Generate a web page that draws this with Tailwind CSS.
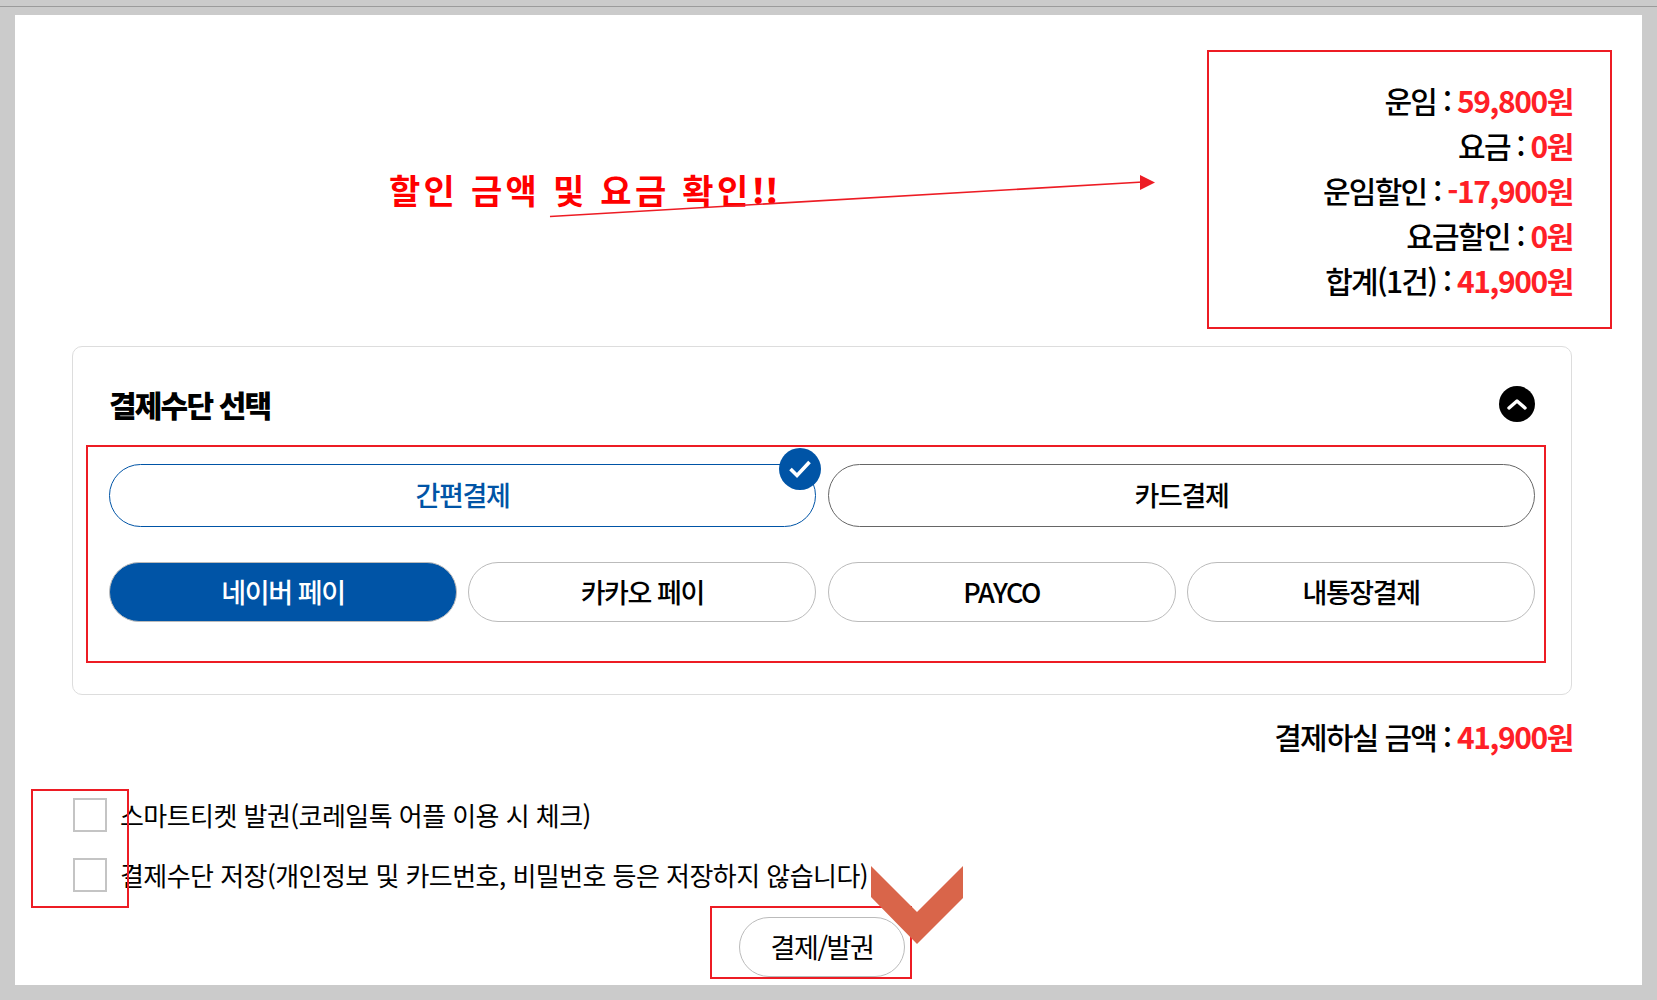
<!DOCTYPE html>
<html lang="ko">
<head>
    <meta charset="UTF-8">
    <title>결제수단 선택</title>
    <script src="https://cdn.jsdelivr.net/npm/@tailwindcss/browser@4"></script>
</head>
<body class="relative h-[1000px] overflow-hidden bg-[#cbcbcb] font-['Noto_Sans_CJK_KR','Noto_Sans',sans-serif] text-black">
    <!-- Window line on top -->
    <div class="h-[7px] border-b border-[#9b9b9b]"></div>

    <!-- Page -->
    <main class="mt-[8px] ml-[15px] h-[970px] w-[1627px] bg-white pt-[63px] pr-[70px] pl-[57px]">
        <!-- Fare summary -->
        <div class="-mr-[1px] text-right text-[30px] leading-[45px] font-medium tracking-[-1.7px]">
            <p>운임 : <b class="font-bold tracking-[-1.4px] text-[#ff1f27]">59,800원</b></p>
            <p>요금 : <b class="font-bold tracking-[-1.4px] text-[#ff1f27]">0원</b></p>
            <p>운임할인 : <b class="font-bold tracking-[-1.4px] text-[#ff1f27]">-17,900원</b></p>
            <p>요금할인 : <b class="font-bold tracking-[-1.4px] text-[#ff1f27]">0원</b></p>
            <p>합계(1건) : <b class="font-bold tracking-[-1.4px] text-[#ff1f27]">41,900원</b></p>
        </div>

        <!-- Payment method card -->
        <section class="mt-[43px] h-[349px] rounded-[10px] border border-[#dddddd] px-[36px] pt-[37px]">
            <div class="flex h-[40px] items-center justify-between">
                <h2 class="text-[30px] font-black tracking-[-1.8px]">결제수단 선택</h2>
                <span class="flex h-[36px] w-[36px] items-center justify-center rounded-full bg-black">
                    <svg width="22" height="14" viewBox="0 0 22 14" fill="none" stroke="white" stroke-width="3.4" stroke-linecap="round" stroke-linejoin="round"><path d="M3 11 L11 4 L19 11"/></svg>
                </span>
            </div>

            <div class="mt-[40px] grid grid-cols-2 gap-x-[12px] text-[27px] font-medium tracking-[-1.4px]">
                <div class="relative flex h-[63px] items-center justify-center rounded-full border border-[#0054a6] text-[#0054a6]">
                    간편결제
                    <span class="absolute -top-[17px] right-[-6px] flex h-[42px] w-[42px] items-center justify-center rounded-full bg-[#0054a6]">
                        <svg width="24" height="20" viewBox="0 0 24 20" fill="none" stroke="white" stroke-width="3.6"><path d="M2.5 10 L9 16.5 L21.5 3"/></svg>
                    </span>
                </div>
                <div class="flex h-[63px] items-center justify-center rounded-full border border-[#666666]">카드결제</div>
            </div>

            <div class="mt-[35px] grid grid-cols-4 gap-x-[11.5px] text-[27px] font-medium tracking-[-1.4px]">
                <div class="flex h-[60px] items-center justify-center rounded-full border border-[#bbbbbb] bg-[#0054a6] text-white">네이버 페이</div>
                <div class="flex h-[60px] items-center justify-center rounded-full border border-[#bbbbbb]">카카오 페이</div>
                <div class="flex h-[60px] items-center justify-center rounded-full border border-[#bbbbbb]">PAYCO</div>
                <div class="flex h-[60px] items-center justify-center rounded-full border border-[#bbbbbb]">내통장결제</div>
            </div>
        </section>

        <!-- Amount to pay -->
        <p class="mt-[19px] -mr-[1px] text-right text-[30px] leading-[45px] font-medium tracking-[-1.7px]">결제하실 금액 : <b class="font-bold tracking-[-1.4px] text-[#ff1f27]">41,900원</b></p>

        <!-- Options -->
        <div class="mt-[39px] ml-[1px] flex flex-col gap-[26px] text-[26px] tracking-[-0.55px]">
            <label class="flex h-[34px] items-center gap-[13px]">
                <span class="h-[34px] w-[34px] border-2 border-[#c4c4c4]"></span>
                <span class="-mt-[2px]">스마트티켓 발권(코레일톡 어플 이용 시 체크)</span>
            </label>
            <label class="flex h-[34px] items-center gap-[13px]">
                <span class="h-[34px] w-[34px] border-2 border-[#c4c4c4]"></span>
                <span class="-mt-[2px]">결제수단 저장(개인정보 및 카드번호, 비밀번호 등은 저장하지 않습니다)</span>
            </label>
        </div>

        <div class="mt-[25px] flex justify-center">
            <button class="h-[60px] w-[166px] rounded-full border border-[#bbbbbb] text-[27px] tracking-[-1.4px]">결제/발권</button>
        </div>
    </main>

    <!-- Annotations drawn over the screenshot -->
    <div class="absolute top-[50px] left-[1207px] h-[279px] w-[405px] border-2 border-[#ed1c24]"></div>
    <div class="absolute top-[445px] left-[86px] h-[218px] w-[1460px] border-2 border-[#ed1c24]"></div>
    <div class="absolute top-[789px] left-[31px] h-[119px] w-[98px] border-2 border-[#ed1c24]"></div>
    <div class="absolute top-[906px] left-[710px] h-[73px] w-[202px] border-2 border-[#ed1c24]"></div>

    <p class="absolute top-[165px] left-[389px] text-[34px] leading-[50px] font-bold tracking-[3.3px] text-[#ff0000]">할인 금액 및 요금 확인<span class="font-black tracking-[0px]">!!</span></p>

    <svg class="absolute top-0 left-0" width="1657" height="1000" fill="none">
        <path d="M550 216.5 L1143 182" stroke="#ed1c24" stroke-width="1.6"/>
        <path d="M1140 175 L1155 182.5 L1140 190 Z" fill="#ed1c24"/>
        <path d="M871 866 L917 912 L963 866 L963 898 L917 944 L871 897 Z" fill="#d9654a"/>
    </svg>
</body>
</html>
